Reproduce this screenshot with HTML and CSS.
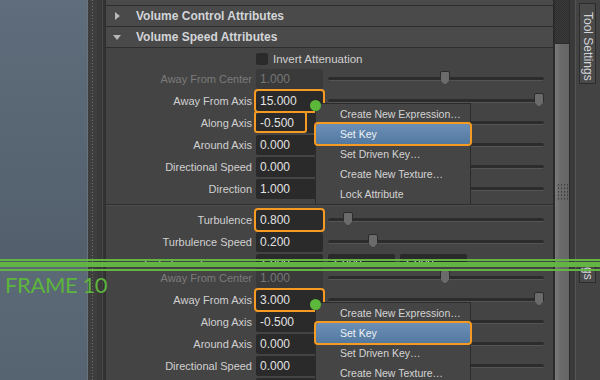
FILE: index.html
```html
<!DOCTYPE html>
<html lang="en">
<head>
<meta charset="UTF-8" />
<meta name="viewport" content="width=device-width, initial-scale=1" />
<title>Volume Speed Attributes</title>
<link rel="stylesheet" href="styles.css">
</head>
<body>
  <div class="shot">

    <!-- first capture -->
    <div class="frame top">
      <div class="screen">
        <div class="viewport"></div>
        <div class="splitter"></div>
        <div class="editor">
          <div class="hdr stub"></div>
          <div class="hdr"><span class="tri right"></span>Volume Control Attributes</div>
          <div class="hdr"><span class="tri down"></span>Volume Speed Attributes</div>
          <div class="section">
            <div class="row check"><span></span><span class="box"></span><span class="check-label">Invert Attenuation</span></div>
            <div class="row off"><label>Away From Center</label><span class="field">1.000</span><span class="slider"><i style="left:112px"></i></span></div>
            <div class="row"><label>Away From Axis</label><span class="field hl">15.000</span><span class="slider"><i style="left:206px"></i></span></div>
            <div class="row"><label>Along Axis</label><span class="field"><b class="mark"></b>-0.500</span><span class="slider"></span></div>
            <div class="row"><label>Around Axis</label><span class="field">0.000</span><span class="slider"></span></div>
            <div class="row"><label>Directional Speed</label><span class="field">0.000</span><span class="slider"></span></div>
            <div class="row"><label>Direction</label><span class="field">1.000</span><span class="slider"></span></div>
            <div class="sep"></div>
            <div class="row"><label>Turbulence</label><span class="field hl">0.800</span><span class="slider"><i style="left:15px"></i></span></div>
            <div class="row"><label>Turbulence Speed</label><span class="field">0.200</span><span class="slider"><i style="left:40px"></i></span></div>
            <div class="row"><label>Turbulence Frequency</label><span class="field">1.000</span><span class="vec"><span class="field">1.000</span><span class="field">1.000</span></span></div>
          </div>
        </div>
        <div class="scroll"><div class="track"></div><div class="thumb"><span class="grip"></span></div></div>
        <div class="gutter"></div>
        <div class="tabs"><div class="tab">Tool Settings</div></div>

        <div class="menu">
          <span class="dot"></span>
          <div class="item">Create New Expression…</div>
          <div class="item active">Set Key</div>
          <div class="item">Set Driven Key…</div>
          <div class="item">Create New Texture…</div>
          <div class="item">Lock Attribute</div>
        </div>
      </div>
    </div>

    <!-- second capture, same scroll position; the part above the marker is hidden -->
    <div class="frame bottom">
      <div class="screen">
        <div class="viewport"></div>
        <div class="splitter"></div>
        <div class="editor">
          <div class="skip"></div>
          <div class="section">
            <div class="row off"><label>Away From Center</label><span class="field">1.000</span><span class="slider"><i style="left:112px"></i></span></div>
            <div class="row"><label>Away From Axis</label><span class="field hl">3.000</span><span class="slider"><i style="left:206px"></i></span></div>
            <div class="row"><label>Along Axis</label><span class="field">-0.500</span><span class="slider"></span></div>
            <div class="row"><label>Around Axis</label><span class="field">0.000</span><span class="slider"></span></div>
            <div class="row"><label>Directional Speed</label><span class="field">0.000</span><span class="slider"></span></div>
            <div class="row"><label>Direction</label><span class="field">1.000</span><span class="slider"></span></div>
          </div>
        </div>
        <div class="scroll"><div class="track"></div><div class="thumb"><span class="grip"></span></div></div>
        <div class="gutter"></div>
        <div class="tabs"><div class="tab">Tool Settings</div></div>

        <div class="menu">
          <span class="dot"></span>
          <div class="item">Create New Expression…</div>
          <div class="item active">Set Key</div>
          <div class="item">Set Driven Key…</div>
          <div class="item">Create New Texture…</div>
          <div class="item">Lock Attribute</div>
        </div>
      </div>
    </div>

    <div class="band"><i class="thin"></i><i class="thick"></i><i class="thin"></i></div>
    <div class="frame-label">FRAME 10</div>
  </div>
</body>
</html>
```

FILE: styles.css
```css
* {
  box-sizing: border-box;
}
body {
  margin: 0;
  background: #444;
  font-family: "Liberation Sans", Arial, sans-serif;
  color: #d0d0d0;
}
.shot {
  position: relative;
  width: 600px;
  height: 380px;
  overflow: hidden;
}
.frame {
  overflow: hidden;
}
.frame.top {
  height: 265px;
}
.frame.bottom {
  height: 115px;
}
.frame.bottom .screen {
  margin-top: -66px;
}
.screen {
  position: relative;
  display: flex;
  height: 420px;
  background: #444;
}

/* left side */
.viewport {
  width: 88px;
  background: linear-gradient(#5f6d7c, #4b5661);
  border-right: 1px solid #6a737c;
}
.splitter {
  width: 17px;
  background:
    repeating-linear-gradient(#6c6c6c 0 1px, transparent 1px 3px) 4px 0 / 1px 100% no-repeat,
    linear-gradient(90deg, #3e3e3e 0 9px, #393939 9px 14px, #474747 14px 15px, #333 15px);
}

/* attribute editor */
.editor {
  width: 449px;
  border-left: 1px solid #2e2e2e;
  border-right: 1px solid #2a2a2a;
  background: #444;
}
.skip {
  height: 67px;
}
.hdr {
  display: flex;
  align-items: center;
  height: 21px;
  background: #4a4a4a;
  border-bottom: 1px solid #2e2e2e;
  font-size: 12px;
  font-weight: bold;
  color: #d3d5d8;
}
.hdr.stub {
  height: 6px;
}
.tri {
  width: 30px;
  height: 10px;
  position: relative;
}
.tri::before {
  content: "";
  position: absolute;
  border-style: solid;
  border-color: transparent;
}
.tri.right::before {
  left: 9px;
  top: 1px;
  border-width: 4px 0 4px 5px;
  border-left-color: #b8b8b8;
}
.tri.down::before {
  left: 7px;
  top: 3px;
  border-width: 5px 4.5px 0 4.5px;
  border-top-color: #b8b8b8;
}
.section {
  padding-top: 1px;
}
.row {
  display: grid;
  grid-template-columns: 146px 67px 217px;
  column-gap: 4px;
  align-items: center;
  height: 22px;
  font-size: 11px;
}
.row.check {
  height: 19px;
}
.row label {
  text-align: right;
  color: #d0d0d0;
}
.row.off label {
  color: #7b7b7b;
}
.box {
  width: 12px;
  height: 12px;
  background: #2b2b2b;
  border-radius: 2px;
}
.check-label {
  margin-left: -54px;
  white-space: nowrap;
  font-size: 11.5px;
}
.field {
  position: relative;
  height: 20px;
  line-height: 20px;
  padding-left: 4px;
  background: #2a2a2a;
  border-radius: 2px;
  font-size: 12px;
  color: #e2e2e2;
}
.row.off .field {
  background: #3a3a3a;
  color: #777;
}
.field.hl {
  outline: 2px solid #f59a23;
  outline-offset: 0;
}
.mark {
  position: absolute;
  left: -2px;
  top: -2px;
  width: 53px;
  height: 22px;
  border: 2px solid #f59a23;
  border-radius: 3px;
}
.slider {
  position: relative;
  margin-left: 1px;
  height: 4px;
  background: #2c2c2c;
  border-radius: 2px;
  border-bottom: 1px solid #555;
}
.slider i {
  position: absolute;
  top: -6px;
  width: 10px;
  height: 14px;
  background: #6b6b6b;
  border: 1px solid #2c2c2c;
  clip-path: polygon(0 0, 100% 0, 100% 62%, 50% 100%, 0 62%);
  border-radius: 2px 2px 0 0;
}
.vec {
  display: flex;
  gap: 5px;
  margin-left: 1px;
}
.vec .field {
  width: 67px;
}
.sep {
  height: 2px;
  margin: 4px 0 3px;
  border-top: 1px solid #2e2e2e;
  border-bottom: 1px solid #4e4e4e;
}

/* right side */
.scroll {
  width: 16px;
  border-left: 1px solid #2c2c2c;
  border-right: 1px solid #2c2c2c;
  display: flex;
  flex-direction: column;
}
.track {
  height: 43px;
  background: repeating-conic-gradient(#2f2f2f 0 25%, #3b3b3b 0 50%) 0 0 / 2px 2px;
}
.thumb {
  position: relative;
  flex: 1;
  background: linear-gradient(90deg, #7a7a7a, #6a6a6a 40%, #666);
  border-top: 1px solid #2c2c2c;
}
.grip {
  position: absolute;
  left: 2px;
  top: 139px;
  width: 11px;
  height: 17px;
  background: radial-gradient(circle, #3c3c3c 0.8px, transparent 1px) 0 0 / 3px 3.5px;
}
.gutter {
  width: 6px;
  background: #3a3a3a;
  border-right: 1px solid #555;
}
.tabs {
  flex: 1;
  padding: 3px 4px 0 3px;
  background: #434343;
}
.tab {
  width: 17px;
  height: 81px;
  padding-top: 8px;
  writing-mode: vertical-rl;
  line-height: 15px;
  background: #4a4a4a;
  border: 1px solid #2c2c2c;
  font-size: 12px;
  color: #d0d4d8;
}

/* context menu */
.menu {
  position: absolute;
  left: 315px;
  top: 103px;
  width: 156px;
  background: #454545;
  border: 1px solid #2b2b2b;
  font-size: 10.5px;
  color: #d4d4d4;
}
.item {
  height: 20px;
  line-height: 20px;
  padding-left: 24px;
  white-space: nowrap;
}
.item.active {
  background: linear-gradient(#6b8fb6, #5479a0);
  color: #eef2f6;
  outline: 2px solid #f59a23;
  border-radius: 2px;
}
.dot {
  position: absolute;
  left: -6px;
  top: -4px;
  width: 11px;
  height: 11px;
  border-radius: 50%;
  background: #5cb83a;
  z-index: 1;
}

/* frame marker */
.band {
  position: absolute;
  left: 0;
  right: 0;
  top: 259px;
  display: flex;
  flex-direction: column;
}
.band i {
  background: #62b443;
}
.band .thin {
  height: 2px;
}
.band .thick {
  height: 5px;
  margin: 1px 0 2px;
}
.frame-label {
  position: absolute;
  left: 5px;
  top: 271px;
  font-family: Lato, "Liberation Sans", sans-serif;
  font-weight: 400;
  font-size: 22px;
  letter-spacing: -0.4px;
  color: #5db53c;
}
```
